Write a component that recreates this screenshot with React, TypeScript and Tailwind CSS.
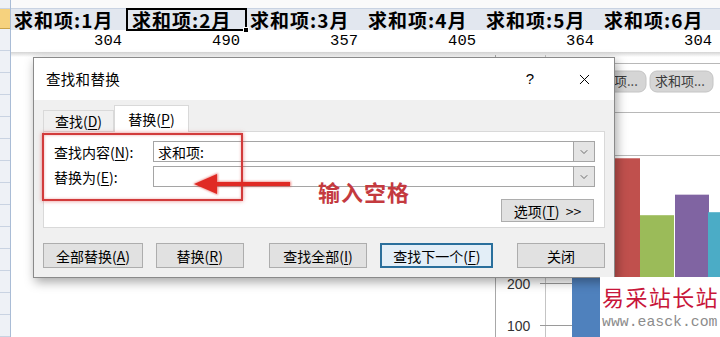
import { X, ChevronDown } from "lucide-react";

const months = [
  { label: "1月", value: 304 },
  { label: "2月", value: 490 },
  { label: "3月", value: 357 },
  { label: "4月", value: 405 },
  { label: "5月", value: 364 },
  { label: "6月", value: 304 },
];

const cjk = "font-['Noto_Sans_CJK_SC',sans-serif]";

function RowHeader() {
  return (
    <div className="flex w-[11px] flex-col border-r border-[#a9bcd6] bg-[#eef1f6]">
      <div className="h-[9px] border-b border-[#c9d3e2]" />
      <div className="h-[21px] border-b border-[#c9a34a] bg-[#f6d27e]" />
      {Array.from({ length: 14 }).map((_, i) => (
        <div key={i} className="h-[22px] shrink-0 border-b border-[#c9d3e2]" />
      ))}
    </div>
  );
}

function Key({ k }: { k: string }) {
  return <span className="underline underline-offset-2">{k}</span>;
}

function Combo({ value }: { value?: string }) {
  return (
    <div className="flex h-[21px] flex-1">
      <div className="flex flex-1 items-center border border-[#a5a5a5] bg-white pl-[4px] text-[14px] leading-none">
        {value}
      </div>
      <div className="flex w-[21px] items-center justify-center border border-l-0 border-[#a5a5a5] bg-[#e4e4e4]">
        <ChevronDown size={12} strokeWidth={1.5} className="text-[#444]" />
      </div>
    </div>
  );
}

function Btn({
  w,
  ml = 0,
  focus = false,
  children,
}: {
  w: number;
  ml?: number;
  focus?: boolean;
  children: React.ReactNode;
}) {
  return (
    <div
      style={{ width: w, marginLeft: ml }}
      className={`flex h-[25px] items-center justify-center text-[14px] leading-none ${
        focus
          ? "border-2 border-[#2a6f9c] bg-[#e3eef7]"
          : "border border-[#adadad] bg-[#e1e1e1]"
      }`}
    >
      {children}
    </div>
  );
}

function Chart() {
  const bars = [
    { x: 572, v: 304, c: "#4f81bd" },
    { x: 606, v: 490, c: "#c0504d" },
    { x: 640, v: 357, c: "#9bbb59" },
    { x: 675, v: 405, c: "#8064a2" },
    { x: 708, v: 364, c: "#4bacc6" },
  ];
  const y = (v: number) => 368 - 0.428 * v;
  return (
    <svg
      className="absolute left-[490px] top-[55px]"
      width={230}
      height={282}
      viewBox="490 55 230 282"
    >
      <line x1={495.5} y1={55} x2={495.5} y2={337} stroke="#a8a8a8" />
      {[63.5, 112.5, 155.5].map((gy) => (
        <line key={gy} x1={490} y1={gy} x2={720} y2={gy} stroke="#b8b8b8" />
      ))}
      <line x1={545.5} y1={55} x2={545.5} y2={337} stroke="#c4c4c4" />
      {[283.5, 325.5].map((gy) => (
        <line key={gy} x1={540} y1={gy} x2={720} y2={gy} stroke="#9a9a9a" />
      ))}
      {bars.map((b) => (
        <rect key={b.x} x={b.x} y={y(b.v)} width={34} height={337 - y(b.v)} fill={b.c} />
      ))}
      <text x={507} y={289} fontSize={14} fill="#333" fontFamily="Liberation Sans, Arial, sans-serif">
        200
      </text>
      <text x={507} y={331} fontSize={14} fill="#333" fontFamily="Liberation Sans, Arial, sans-serif">
        100
      </text>
      {[583, 650].map((px) => (
        <g key={px}>
          <rect x={px} y={71} width={63} height={21} rx={7} fill="#d5d5d5" stroke="#c4c4c4" />
          <text
            x={px + 5}
            y={86}
            fontSize={13}
            fill="#3a3a3a"
            fontFamily="'Noto Sans CJK SC', sans-serif"
          >
            求和项...
          </text>
        </g>
      ))}
    </svg>
  );
}

export default function App() {
  return (
    <div className={`relative flex h-[337px] w-[720px] overflow-hidden bg-white text-black ${cjk}`}>
      <RowHeader />
      <div className="flex flex-1 flex-col">
        <div className="h-[9px] shrink-0 border-b border-[#c9d3e2] bg-[#fafafa]" />
        <div className="flex h-[21px] shrink-0 bg-[#e2e7ef]">
          {months.map((m, i) => (
            <div key={m.label} className="relative w-[118px] shrink-0 pl-[3px]">
              <span className="text-[19px] font-bold leading-[21px] tracking-[1px]">
                求和项:{m.label}
              </span>
              {i === 1 && (
                <div className="absolute -left-[3px] -top-[1px] h-[23px] w-[121px] border-2 border-black">
                  <div className="absolute -bottom-[4px] -right-[4px] h-[6px] w-[6px] border border-white bg-black" />
                </div>
              )}
            </div>
          ))}
        </div>
        <div className="flex h-[22px] shrink-0">
          {months.map((m) => (
            <div
              key={m.label}
              className="w-[118px] shrink-0 pr-[7px] text-right font-['Liberation_Mono',monospace] text-[15.5px] leading-[22px] text-black"
            >
              {m.value}
            </div>
          ))}
        </div>
        <div className="h-[5px] shrink-0 bg-gradient-to-b from-[#d4d4d4] to-white" />
      </div>

      <Chart />

      {/* dialog */}
      <div className="absolute left-[33px] top-[57px] flex h-[221px] w-[582px] flex-col border border-[#8a8a8a] bg-[#f0f0f0] shadow-[2px_4px_10px_rgba(0,0,0,0.35)]">
        <div className="flex h-[42px] shrink-0 items-center bg-white pl-[12px] pr-[21px]">
          <span className="text-[14.5px] tracking-[0.3px]">查找和替换</span>
          <span className="ml-auto font-['Liberation_Sans',sans-serif] text-[15px]">?</span>
          <X size={17} strokeWidth={1.4} className="ml-[42px]" />
        </div>
        <div className="flex flex-1 flex-col px-[9px]">
          <div className="flex h-[31px] shrink-0 items-end">
            <div className="flex h-[21px] w-[71px] items-center justify-center border border-b-0 border-[#d9d9d9] bg-[#f0f0f0] text-[14px] leading-none">
              查找(<Key k="D" />)
            </div>
            <div className="relative -mb-px flex h-[27px] w-[75px] items-center justify-center border border-b-0 border-[#d9d9d9] bg-white text-[14px] leading-none">
              替换(<Key k="P" />)
            </div>
          </div>
          <div className="flex h-[97px] shrink-0 flex-col border border-[#d9d9d9] bg-white pl-[10px] pr-[9px] pt-[9px]">
            <div className="flex items-center">
              <span className="w-[99px] text-[14px] leading-none">
                查找内容(<Key k="N" />):
              </span>
              <Combo value="求和项:" />
            </div>
            <div className="mt-[4px] flex items-center">
              <span className="w-[99px] text-[14px] leading-none">
                替换为(<Key k="E" />):
              </span>
              <Combo />
            </div>
            <div className="mt-[12px] flex justify-end pr-[1px]">
              <div className="flex h-[23px] w-[93px] items-center justify-center border border-[#adadad] bg-[#e1e1e1] text-[14px] leading-none">
                选项(<Key k="T" />)&nbsp;&nbsp;&gt;&gt;
              </div>
            </div>
          </div>
          <div className="mt-[15px] flex">
            <Btn w={100}>
              全部替换(<Key k="A" />)
            </Btn>
            <Btn w={88} ml={13}>
              替换(<Key k="R" />)
            </Btn>
            <Btn w={99} ml={25}>
              查找全部(<Key k="I" />)
            </Btn>
            <Btn w={113} ml={13} focus>
              查找下一个(<Key k="F" />)
            </Btn>
            <Btn w={88} ml={24}>
              关闭
            </Btn>
          </div>
        </div>
        {/* red annotation box */}
        <div className="absolute left-[8px] top-[75px] h-[68px] w-[201px] border-2 border-[#d23b3b] shadow-[0_0_4px_rgba(210,40,40,0.55),inset_0_0_3px_rgba(210,40,40,0.4)]" />
      </div>

      {/* arrow + note */}
      <svg className="absolute left-[190px] top-[170px]" width={105} height={30} viewBox="0 0 105 30">
        <defs>
          <filter id="glow" x="-20%" y="-50%" width="140%" height="200%">
            <feGaussianBlur stdDeviation="1.2" />
          </filter>
        </defs>
        <g fill="#e0302a" filter="url(#glow)" opacity="0.6">
          <rect x={24} y={11.5} width={77} height={5} />
          <polygon points="3,14 28,3 28,25" />
        </g>
        <g fill="#e02a24">
          <rect x={24} y={12} width={76} height={4} />
          <polygon points="4,14 27,4 27,24" />
        </g>
      </svg>
      <div className="absolute left-[318px] top-[180px] text-[22px] font-bold leading-none tracking-[1px] text-[#c43a3f]">
        输入空格
      </div>

      {/* watermark */}
      <div className="absolute left-[600px] top-[277px] flex h-[60px] w-[120px] flex-col bg-white pl-[2px] pt-[5px]">
        <span className="text-[22px] leading-[28px] tracking-[1.4px] text-[#c8163a]">易采站长站</span>
        <span className="mt-[3px] font-['Liberation_Mono',monospace] text-[14.8px] leading-[18px] text-[#8c8c8c]">
          www.easck.com
        </span>
      </div>
    </div>
  );
}
